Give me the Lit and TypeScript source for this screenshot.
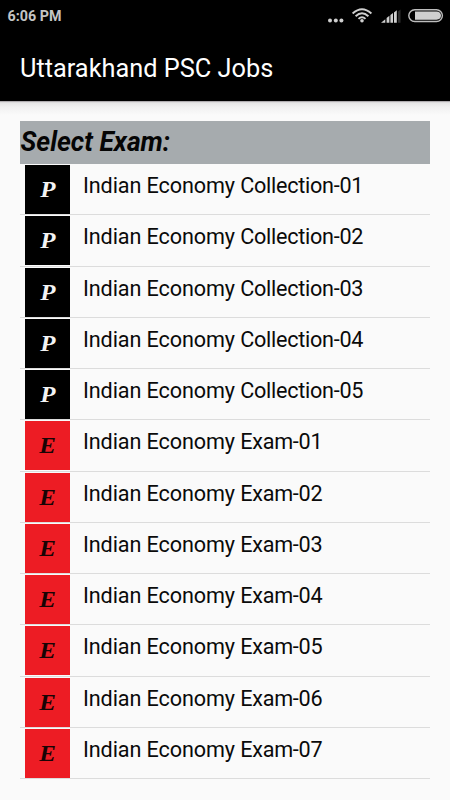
import { LitElement, html, css } from "lit";
import { customElement, property } from "lit/decorators.js";

@customElement("status-bar")
class StatusBar extends LitElement {
  static styles = css`
    :host { display: flex; justify-content: space-between; height: 31px; background: #000; color: #c4c4c4; }
    .time { font: 700 14.3px/33px Roboto, sans-serif; margin-left: 7.5px; white-space: nowrap; }
    svg { display: block; width: 140px; height: 31px; }
  `;
  render() {
    return html`
      <span class="time">6:06 PM</span>
      <svg viewBox="310 0 140 31">
        <g fill="#cfcfcf">
          <circle cx="330" cy="20.6" r="2" /><circle cx="335.8" cy="20.6" r="2" /><circle cx="341.4" cy="20.6" r="2" />
          <circle cx="362" cy="20.8" r="1.8" />
        </g>
        <g fill="none" stroke="#cfcfcf" stroke-width="1.9">
          <path d="M352.6 13.5Q362 4.8 371.4 13.5" />
          <path d="M355.6 16.3Q362 10.2 368.4 16.3" />
          <path d="M358.5 18.9Q362 15.5 365.5 18.9" />
        </g>
        <path d="M381 22.8L385.3 19.2V22.8ZM386.6 22.8V18L389.4 15.8V22.8ZM390.4 22.8V15L393 13V22.8ZM394 22.8V12.4L396.8 10.2V22.8Z" fill="#cfcfcf" />
        <path d="M398 22.8V11.4L400.5 9.4V22.8Z" fill="#2c2c2c" />
        <rect x="408.8" y="9.7" width="33.6" height="11.8" rx="5.9" fill="none" stroke="#bdbdbd" stroke-width="1.4" />
        <path d="M415 11.4H436.5Q441 11.6 441 15.6T436.5 19.8H415Z" fill="#cfcfcf" />
      </svg>
    `;
  }
}

@customElement("exam-row")
class ExamRow extends LitElement {
  @property() kind = "P";
  @property() name = "";
  static styles = css`
    :host { display: flex; box-sizing: border-box; height: 51.25px; padding-left: 5px; border-bottom: 1px solid #dcdcdc; }
    .tile { width: 45px; height: 49px; margin-top: 1px; flex: none; text-align: center;
      font: italic 700 24px/48px "Liberation Serif", serif; }
    .glyph { display: inline-block; transform: translateX(0.5px) scaleX(1.04); }
    .P { background: #000; color: #f4f4f4; }
    .E { background: #ed1c24; color: #180405; }
    .label { margin-left: 13px; font: 400 21.6px/44px Roboto, sans-serif; color: #0a0a0a; white-space: nowrap; letter-spacing: -0.1px; }
    .name { letter-spacing: -0.26px; }
  `;
  render() {
    return html`<div class="tile ${this.kind}"><span class="glyph">${this.kind}</span></div>
      <span class="label">Indian Economy <span class="name">${this.name}</span></span>`;
  }
}

const pad = (n: number) => String(n).padStart(2, "0");
const exams = [
  ...Array.from({ length: 5 }, (_, i) => ({ kind: "P", name: `Collection-${pad(i + 1)}` })),
  ...Array.from({ length: 7 }, (_, i) => ({ kind: "E", name: `Exam-${pad(i + 1)}` })),
];

@customElement("app-root")
class AppRoot extends LitElement {
  static styles = css`
    :host { display: block; width: 450px; height: 800px; overflow: hidden; background: #fafafa; }
    .bar { height: 70px; background: #000; color: #fff; padding-left: 20px; font: 400 25px/75px Roboto, sans-serif; white-space: nowrap; }
    .title { display: inline-block; transform-origin: left; transform: scaleX(1.013); }
    .shade { height: 20px; background: linear-gradient(#8a868a 0, #d4d2d4 1px, #e6e6e6 2px, #f0f0f0 6px, #fafafa 14px); }
    .list { margin: 0 20px; }
    .heading { height: 43px; background: #a6abae; color: #050505; font: italic 700 27px/42px Roboto, sans-serif; white-space: nowrap; }
    .caption { display: inline-block; transform-origin: left; transform: translateX(0.5px) scaleX(0.98); }
  `;
  render() {
    return html`
      <status-bar></status-bar>
      <div class="bar"><span class="title">Uttarakhand PSC Jobs</span></div>
      <div class="shade"></div>
      <div class="list">
        <div class="heading"><span class="caption">Select Exam:</span></div>
        ${exams.map((e) => html`<exam-row .kind=${e.kind} .name=${e.name}></exam-row>`)}
      </div>
    `;
  }
}
